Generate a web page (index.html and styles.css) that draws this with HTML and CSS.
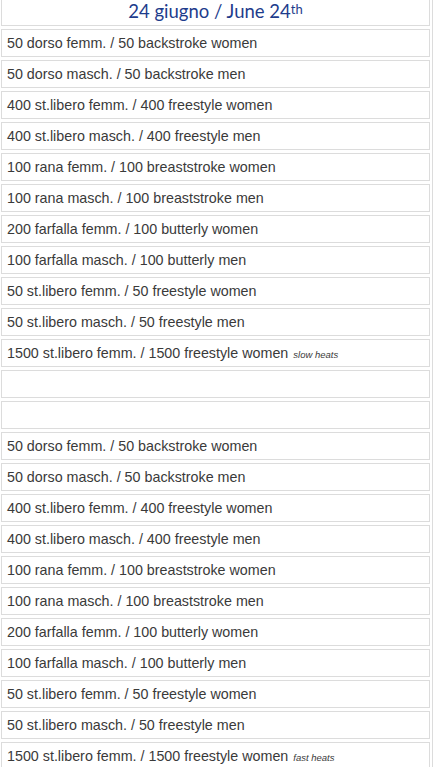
FILE: index.html
```html
<!DOCTYPE html>
<html>
<head>
<meta charset="utf-8">
<link rel="stylesheet" href="styles.css">
</head>
<body>
<div class="page">
  <div class="list">
    <div class="cell head">24 giugno / June 24<sup>th</sup></div>
    <div class="cell">50 dorso femm. / 50 backstroke women</div>
    <div class="cell">50 dorso masch. / 50 backstroke men</div>
    <div class="cell">400 st.libero femm. / 400 freestyle women</div>
    <div class="cell">400 st.libero masch. / 400 freestyle men</div>
    <div class="cell">100 rana femm. / 100 breaststroke women</div>
    <div class="cell">100 rana masch. / 100 breaststroke men</div>
    <div class="cell">200 farfalla femm. / 100 butterly women</div>
    <div class="cell">100 farfalla masch. / 100 butterly men</div>
    <div class="cell">50 st.libero femm. / 50 freestyle women</div>
    <div class="cell">50 st.libero masch. / 50 freestyle men</div>
    <div class="cell">1500 st.libero femm. / 1500 freestyle women <em class="note">slow heats</em></div>
    <div class="cell"></div>
    <div class="cell"></div>
    <div class="cell">50 dorso femm. / 50 backstroke women</div>
    <div class="cell">50 dorso masch. / 50 backstroke men</div>
    <div class="cell">400 st.libero femm. / 400 freestyle women</div>
    <div class="cell">400 st.libero masch. / 400 freestyle men</div>
    <div class="cell">100 rana femm. / 100 breaststroke women</div>
    <div class="cell">100 rana masch. / 100 breaststroke men</div>
    <div class="cell">200 farfalla femm. / 100 butterly women</div>
    <div class="cell">100 farfalla masch. / 100 butterly men</div>
    <div class="cell">50 st.libero femm. / 50 freestyle women</div>
    <div class="cell">50 st.libero masch. / 50 freestyle men</div>
    <div class="cell">1500 st.libero femm. / 1500 freestyle women <em class="note">fast heats</em></div>
  </div>
  <div class="side"></div>
</div>
</body>
</html>
```
FILE: styles.css
```css
html, body {
  margin: 0;
  padding: 0;
  background: #fff;
  overflow: hidden;
}
body {
  font-family: "Liberation Sans", Arial, sans-serif;
  color: #3a3a3a;
}
.page {
  display: flex;
  height: 767px;
  padding-left: 1px;
  overflow: hidden;
}
.list {
  width: 429px;
  display: flex;
  flex-direction: column;
  gap: 3px;
  flex: none;
}
.side {
  margin-left: 2px;
  width: 0;
  border-left: 1px solid #dcdcdc;
}
.cell {
  box-sizing: border-box;
  height: 28px;
  border: 1px solid #dcdcdc;
  padding: 0 5px;
  display: flex;
  align-items: center;
  font-size: 14.3px;
  white-space: nowrap;
  flex: none;
}
.cell.head {
  height: 26px;
  border-top: none;
  justify-content: center;
  font-family: Lato, "Open Sans", sans-serif;
  font-size: 18.5px;
  color: #1e3c8c;
  padding-bottom: 3px;
}
.head sup {
  font-size: 13px;
  position: relative;
  top: -2px;
  vertical-align: super;
  line-height: 0;
}
.note {
  font-size: 9.5px;
  margin-left: 5px;
  margin-top: 2px;
}
```
